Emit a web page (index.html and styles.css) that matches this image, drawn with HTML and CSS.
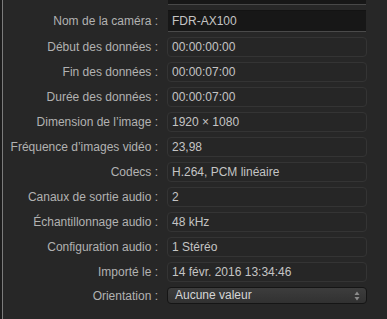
FILE: index.html
```html
<!DOCTYPE html>
<html lang="fr">
<head>
    <meta charset="UTF-8">
    <title>Inspecteur</title>
    <link rel="stylesheet" href="styles.css">
</head>
<body>
    <div class="panel">
        <div class="prev-field"></div>
        <div class="rows">
            <div class="label">Nom de la caméra :</div>
            <div class="field edit">FDR-AX100</div>

            <div class="label">Début des données :</div>
            <div class="field">00:00:00:00</div>

            <div class="label">Fin des données :</div>
            <div class="field">00:00:07:00</div>

            <div class="label">Durée des données :</div>
            <div class="field">00:00:07:00</div>

            <div class="label">Dimension de l’image :</div>
            <div class="field">1920 × 1080</div>

            <div class="label">Fréquence d’images vidéo :</div>
            <div class="field">23,98</div>

            <div class="label">Codecs :</div>
            <div class="field">H.264, PCM linéaire</div>

            <div class="label">Canaux de sortie audio :</div>
            <div class="field">2</div>

            <div class="label">Échantillonnage audio :</div>
            <div class="field">48 kHz</div>

            <div class="label">Configuration audio :</div>
            <div class="field">1 Stéréo</div>

            <div class="label">Importé le :</div>
            <div class="field">14 févr. 2016 13:34:46</div>

            <div class="label">Orientation :</div>
            <div class="popup">
                <span>Aucune valeur</span>
                <svg class="arrows" width="6" height="10" viewBox="0 0 6 10">
                    <path d="M3 0.5 L5.5 4 L0.5 4 Z" fill="#8a8a8a"/>
                    <path d="M3 9.5 L5.5 6 L0.5 6 Z" fill="#8a8a8a"/>
                </svg>
            </div>
        </div>
    </div>
</body>
</html>
```

FILE: styles.css
```css
html, body {
    margin: 0;
    height: 100%;
}
body {
    background-color: #1c1c1c;
    padding-left: 2px;
    box-sizing: border-box;
    font-family: "Liberation Sans", Arial, sans-serif;
    font-size: 12px;
    overflow: hidden;
}
.panel {
    background-color: #272727;
    border-left: 1px solid #7c7c7c;
    height: 100%;
}
.prev-field {
    margin-left: 165px;
    width: 198px;
    height: 4px;
    background-color: #171717;
    border-bottom: 1px solid #484848;
}
.rows {
    display: grid;
    grid-template-columns: 155px 200px;
    column-gap: 9px;
    row-gap: 5px;
    padding-top: 5px;
    align-items: center;
}
.label {
    color: #b2b2b2;
    text-align: right;
    white-space: nowrap;
}
.field {
    height: 18px;
    line-height: 18px;
    border: 1px solid #343434;
    border-radius: 4px;
    background-color: #262626;
    color: #c4c4c4;
    padding-left: 4px;
}
.field.edit {
    height: 20px;
    line-height: 20px;
    margin: 0 1px;
    border: none;
    border-top: 1px solid #131313;
    border-bottom: 1px solid #4a4a4a;
    border-radius: 0;
    background-color: #171717;
    padding-left: 4px;
}
.popup {
    height: 15px;
    border: 1px solid #151515;
    border-radius: 4px;
    background: linear-gradient(#3d3d3d, #313131);
    color: #d6d6d6;
    padding-left: 7px;
    padding-right: 6px;
    display: flex;
    align-items: center;
    justify-content: space-between;
    line-height: 15px;
}
```
